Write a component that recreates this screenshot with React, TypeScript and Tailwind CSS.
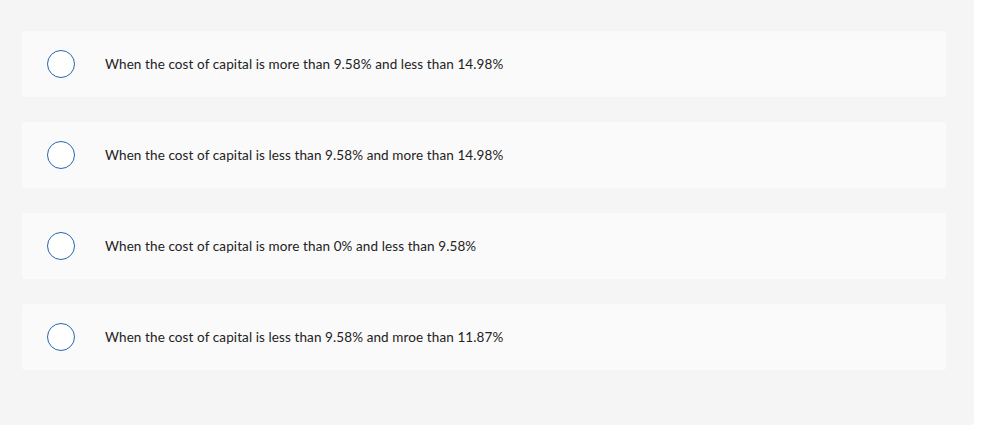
const options = [
  'When the cost of capital is more than 9.58% and less than 14.98%',
  'When the cost of capital is less than 9.58% and more than 14.98%',
  'When the cost of capital is more than 0% and less than 9.58%',
  'When the cost of capital is less than 9.58% and mroe than 11.87%',
]

export default function App() {
  return (
    <div className="min-h-[431px] bg-white">
      <div
        className="w-[974px] h-[425px] bg-[#f5f5f5] rounded-br-[4px] pt-[31px] pl-[22px] flex flex-col gap-[25px]"
        style={{ fontFamily: 'Lato, "Liberation Sans", sans-serif' }}
      >
        {options.map((text, i) => (
          <label
            key={i}
            className="w-[924px] h-[66px] bg-[#fafafa] rounded-[3px] flex items-center pl-[25px] cursor-pointer"
          >
            <span className="w-[28px] h-[28px] rounded-full border-[1.5px] border-[#2467b1] bg-white shrink-0" />
            <span className="ml-[30px] text-[13.5px] text-[#222] tracking-[0.1px]">{text}</span>
          </label>
        ))}
      </div>
    </div>
  )
}
